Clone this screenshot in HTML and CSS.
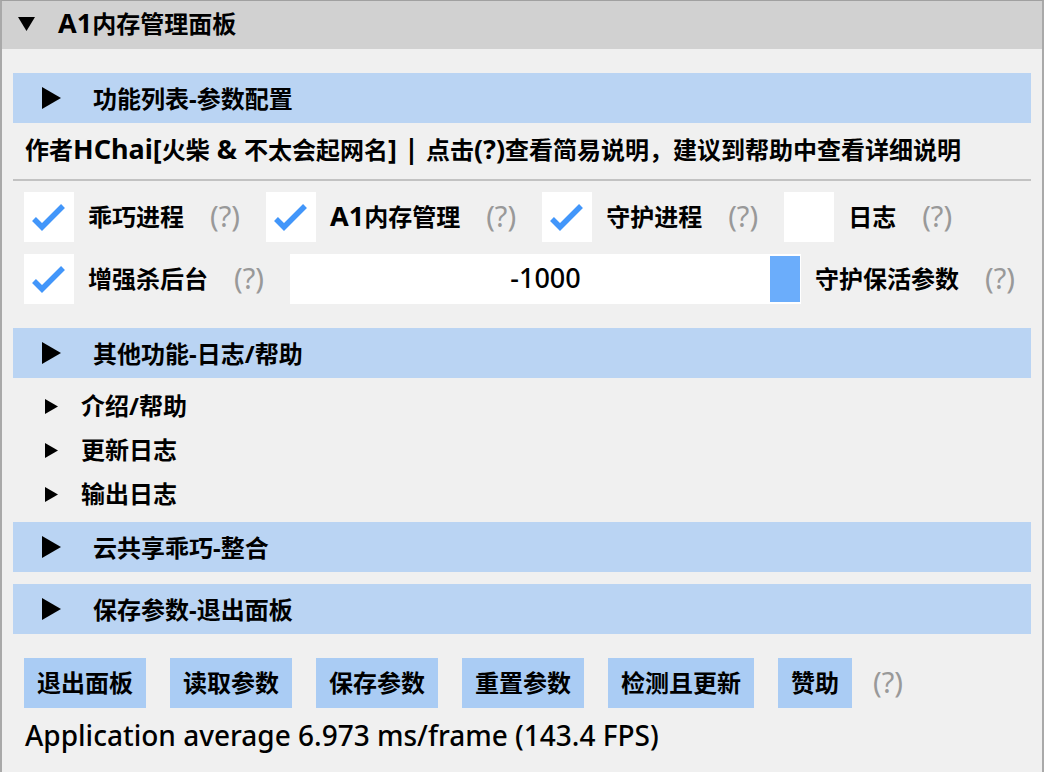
FILE: index.html
```html
<!DOCTYPE html>
<html>
<head>
  <meta charset="utf-8">
  <title>A1内存管理面板</title>
  <link rel="stylesheet" href="styles.css">
</head>
<body>
  <div class="window">
    <div class="titlebar">
      <svg class="arrow-down" width="17" height="14" viewBox="0 0 17 14"><polygon points="0,0 17,0 8.5,14" /></svg>
      <span class="title"><span class="lat">A1</span>内存管理面板</span>
    </div>
    <div class="content">
      <div class="header">
        <svg class="arrow" width="19" height="22" viewBox="0 0 19 22"><polygon points="0,0 19,11 0,22" /></svg>
        <span>功能列表-参数配置</span>
      </div>

      <div class="text-line">作者<span class="lat">HChai[</span>火柴<span class="lat"> &amp; </span>不太会起网名<span class="lat">] | </span>点击<span class="lat">(?)</span>查看简易说明，建议到帮助中查看详细说明</div>
      <div class="separator"></div>

      <div class="row">
        <div class="checkbox"><svg class="check" width="50" height="50" viewBox="0 0 50 50"><polyline points="10,27 18,35 39,14" /></svg></div>
        <span class="label">乖巧进程</span>
        <span class="help">(?)</span>
        <div class="checkbox"><svg class="check" width="50" height="50" viewBox="0 0 50 50"><polyline points="10,27 18,35 39,14" /></svg></div>
        <span class="label"><span class="lat">A1</span>内存管理</span>
        <span class="help">(?)</span>
        <div class="checkbox"><svg class="check" width="50" height="50" viewBox="0 0 50 50"><polyline points="10,27 18,35 39,14" /></svg></div>
        <span class="label">守护进程</span>
        <span class="help">(?)</span>
        <div class="checkbox"></div>
        <span class="label">日志</span>
        <span class="help">(?)</span>
      </div>

      <div class="row">
        <div class="checkbox"><svg class="check" width="50" height="50" viewBox="0 0 50 50"><polyline points="10,27 18,35 39,14" /></svg></div>
        <span class="label">增强杀后台</span>
        <span class="help">(?)</span>
        <div class="slider">
          <span class="slider-value">-1000</span>
          <div class="slider-grab"></div>
        </div>
        <span class="label slider-label">守护保活参数</span>
        <span class="help">(?)</span>
      </div>

      <div class="header spaced">
        <svg class="arrow" width="19" height="22" viewBox="0 0 19 22"><polygon points="0,0 19,11 0,22" /></svg>
        <span>其他功能-日志/帮助</span>
      </div>

      <div class="tree-node">
        <svg class="arrow-small" width="13" height="15" viewBox="0 0 13 15"><polygon points="0,0 13,7.5 0,15" /></svg>
        <span>介绍/帮助</span>
      </div>
      <div class="tree-node">
        <svg class="arrow-small" width="13" height="15" viewBox="0 0 13 15"><polygon points="0,0 13,7.5 0,15" /></svg>
        <span>更新日志</span>
      </div>
      <div class="tree-node">
        <svg class="arrow-small" width="13" height="15" viewBox="0 0 13 15"><polygon points="0,0 13,7.5 0,15" /></svg>
        <span>输出日志</span>
      </div>

      <div class="header">
        <svg class="arrow" width="19" height="22" viewBox="0 0 19 22"><polygon points="0,0 19,11 0,22" /></svg>
        <span>云共享乖巧-整合</span>
      </div>
      <div class="header">
        <svg class="arrow" width="19" height="22" viewBox="0 0 19 22"><polygon points="0,0 19,11 0,22" /></svg>
        <span>保存参数-退出面板</span>
      </div>

      <div class="button-row spaced">
        <button class="btn">退出面板</button>
        <button class="btn">读取参数</button>
        <button class="btn">保存参数</button>
        <button class="btn">重置参数</button>
        <button class="btn">检测且更新</button>
        <button class="btn">赞助</button>
        <span class="help">(?)</span>
      </div>

      <div class="fps">Application average 6.973 ms/frame (143.4 FPS)</div>
    </div>
  </div>
</body>
</html>
```

FILE: styles.css
```css
body {
  margin: 0;
  padding: 0;
  background-color: #f0f0f0;
  font-family: "Noto Sans", "Noto Sans CJK SC", sans-serif;
  font-size: 24px;
  color: #000;
  overflow: hidden;
}

.lat {
  font-size: 27px;
  line-height: 1;
}

.window {
  width: 1044px;
  height: 772px;
  box-sizing: border-box;
  border-left: 2px solid #a9a9a9;
  border-right: 2px solid #a9a9a9;
  border-top: 1px solid #a0a0a0;
  background-color: #f0f0f0;
}

.titlebar {
  height: 48px;
  background-color: #d1d1d1;
  display: flex;
  align-items: center;
  padding-left: 16px;
  font-weight: 700;
}

.arrow-down {
  margin-right: 23px;
  margin-top: -2px;
}

.title {
  line-height: 48px;
  margin-top: -2px;
}

.content {
  display: flex;
  flex-direction: column;
  gap: 12px;
  padding: 24px 11px 0 11px;
}

.header {
  height: 50px;
  background-color: #bad4f3;
  display: flex;
  align-items: center;
  padding-left: 29px;
  font-weight: 700;
}

.header span {
  margin-top: -2px;
}

.header .arrow {
  margin-right: 32px;
}

.spaced {
  margin-top: 12px;
}

.text-line {
  height: 32px;
  line-height: 30px;
  padding-left: 12px;
  font-weight: 700;
  white-space: nowrap;
}

.separator {
  height: 2px;
  background-color: #c2c2c2;
  margin-bottom: -1px;
}

.row {
  display: flex;
  align-items: center;
  height: 50px;
  padding-left: 11px;
}

.row > span {
  margin-top: -3px;
}

.checkbox {
  width: 50px;
  height: 50px;
  background-color: #fff;
  flex-shrink: 0;
}

.check {
  display: block;
}

.check polyline {
  fill: none;
  stroke: #4296fa;
  stroke-width: 5.5;
}

.checkbox + .label {
  margin-left: 14px;
}

.label {
  font-weight: 700;
  white-space: nowrap;
}

.help {
  color: #999;
  font-size: 29px;
  margin-left: 26px;
  margin-right: 26px;
  white-space: nowrap;
}

.slider {
  width: 511px;
  height: 50px;
  background-color: #fff;
  position: relative;
  display: flex;
  align-items: center;
  justify-content: center;
  flex-shrink: 0;
}

.slider-value {
  font-size: 27px;
  font-weight: 500;
  margin-top: -3px;
}

.slider-grab {
  position: absolute;
  right: 1px;
  top: 2px;
  width: 30px;
  height: 46px;
  background-color: #6badfb;
}

.slider-label {
  margin-left: 14px;
}

.tree-node {
  height: 32px;
  display: flex;
  align-items: center;
  padding-left: 32px;
  font-weight: 700;
}

.tree-node span {
  margin-top: -3px;
}

.arrow-small {
  margin-right: 23px;
}

.button-row {
  display: flex;
  align-items: center;
  gap: 24px;
  padding-left: 11px;
}

.btn {
  height: 50px;
  padding: 0 13px 3px 13px;
  border: none;
  background-color: #aaccf4;
  font-family: "Noto Sans", "Noto Sans CJK SC", sans-serif;
  font-size: 24px;
  font-weight: 700;
  color: #000;
}

.button-row .help {
  margin-left: -3px;
  margin-top: -3px;
}

.fps {
  height: 32px;
  line-height: 30px;
  padding-left: 12px;
  font-weight: 500;
  font-size: 28px;
  white-space: nowrap;
}
```
